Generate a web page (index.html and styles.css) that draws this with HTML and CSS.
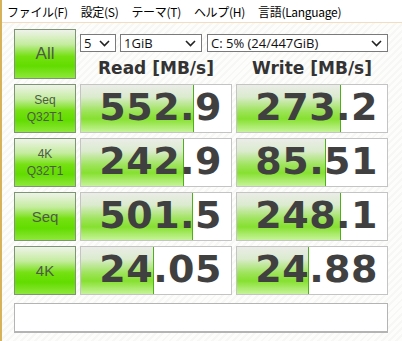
FILE: index.html
```html
<!DOCTYPE html>
<html lang="ja">
<head>
    <meta charset="UTF-8">
    <title>CrystalDiskMark</title>
    <link rel="stylesheet" href="styles.css">
</head>
<body>
    <!-- メニュー -->
    <div class="menu">
        <span class="menu-item">ファイル(F)</span>
        <span class="menu-item">設定(S)</span>
        <span class="menu-item">テーマ(T)</span>
        <span class="menu-item">ヘルプ(H)</span>
        <span class="menu-item">言語(Language)</span>
    </div>

    <div class="main">
        <div class="grid">
            <div class="btn btn-all">All</div>
            <div class="top-right">
                <div class="selects">
                    <div class="select sel-count"><span>5</span><svg width="11" height="7" viewBox="0 0 11 7"><path d="M1 1 L5.5 5.5 L10 1" fill="none" stroke="#222" stroke-width="1.6"/></svg></div>
                    <div class="select sel-size"><span>1GiB</span><svg width="11" height="7" viewBox="0 0 11 7"><path d="M1 1 L5.5 5.5 L10 1" fill="none" stroke="#222" stroke-width="1.6"/></svg></div>
                    <div class="select sel-drive"><span>C: 5% (24/447GiB)</span><svg width="11" height="7" viewBox="0 0 11 7"><path d="M1 1 L5.5 5.5 L10 1" fill="none" stroke="#222" stroke-width="1.6"/></svg></div>
                </div>
                <div class="heads">
                    <div class="head">Read [MB/s]</div>
                    <div class="head">Write [MB/s]</div>
                </div>
            </div>

            <!-- Seq Q32T1 -->
            <div class="btn btn-small">Seq<br>Q32T1</div>
            <div class="value"><div class="bar" style="width: 112px"></div><span>552.9</span></div>
            <div class="value"><div class="bar" style="width: 103px"></div><span>273.2</span></div>

            <!-- 4K Q32T1 -->
            <div class="btn btn-small">4K<br>Q32T1</div>
            <div class="value"><div class="bar" style="width: 102px"></div><span>242.9</span></div>
            <div class="value"><div class="bar" style="width: 88px"></div><span>85.51</span></div>

            <!-- Seq -->
            <div class="btn btn-big">Seq</div>
            <div class="value"><div class="bar" style="width: 111px"></div><span>501.5</span></div>
            <div class="value"><div class="bar" style="width: 103px"></div><span>248.1</span></div>

            <!-- 4K -->
            <div class="btn btn-big">4K</div>
            <div class="value"><div class="bar" style="width: 72px"></div><span>24.05</span></div>
            <div class="value"><div class="bar" style="width: 71px"></div><span>24.88</span></div>
        </div>

        <div class="comment"></div>
    </div>
</body>
</html>
```

FILE: styles.css
```css
body {
    margin: 0;
    width: 402px;
    height: 341px;
    overflow: hidden;
    font-family: "DejaVu Sans", "Noto Sans CJK JP", sans-serif;
    background: repeating-linear-gradient(135deg, #f7f7f5 0px, #f7f7f5 2px, #fdfdfc 2px, #fdfdfc 5px);
    border-left: 2px solid #d6b25a;
    box-sizing: border-box;
}

.menu {
    height: 22px;
    background: #fff;
    border-bottom: 1px solid #f3dcc0;
    margin-left: -2px;
    padding-left: 7px;
    display: flex;
    align-items: center;
    font-family: "Noto Sans CJK JP", sans-serif;
    font-size: 12px;
    color: #000;
}

.menu-item {
    margin-right: 13px;
    letter-spacing: -0.3px;
}

.main {
    padding: 6px 0 0 12px;
}

.grid {
    display: grid;
    grid-template-columns: 62px 152px 152px;
    grid-template-rows: 50px repeat(4, 49px);
    column-gap: 4px;
    row-gap: 5px;
}

.btn {
    box-sizing: border-box;
    border: 1px solid #7f9474;
    background: linear-gradient(to bottom, #eef3ea 0%, #c4ec9e 30%, #74e010 55%, #62dc00 75%, #8ee83a 100%);
    color: #4f5a48;
    display: flex;
    align-items: center;
    justify-content: center;
    text-align: center;
}

.btn-all {
    font-size: 17px;
    font-family: "Liberation Sans", sans-serif;
}

.btn-small {
    font-size: 12px;
    line-height: 17px;
    font-family: "Liberation Sans", sans-serif;
}

.btn-big {
    font-size: 15px;
    font-family: "Liberation Sans", sans-serif;
}

.top-right {
    grid-column: 2 / 4;
    display: flex;
    flex-direction: column;
}

.selects {
    display: flex;
    gap: 4px;
    margin-top: 5px;
}

.select {
    box-sizing: border-box;
    height: 18px;
    background: #fff;
    border: 1px solid #7a7a7a;
    display: flex;
    align-items: center;
    justify-content: space-between;
    padding: 0 5px 0 3px;
    font-family: "Open Sans", sans-serif;
    font-size: 13px;
    color: #111;
}

.sel-count { width: 36px; }
.sel-size { width: 82px; }
.sel-drive { width: 181px; margin-left: 1px; }

.heads {
    display: flex;
    gap: 4px;
    margin-top: 6px;
}

.head {
    width: 152px;
    text-align: center;
    font-weight: bold;
    font-size: 17px;
    color: #333;
}

.value {
    position: relative;
    box-sizing: border-box;
    border: 1px solid #c4c4c4;
    background: #fff;
    display: flex;
    align-items: center;
    justify-content: flex-end;
    padding: 0 9px 3px 0;
}

.bar {
    position: absolute;
    left: 0;
    top: 0;
    bottom: 0;
    border-right: 1px solid #4fae1c;
    background: linear-gradient(to bottom, #eaede7 0%, #dcebcf 25%, #9ee45c 55%, #86e030 72%, #c6f49a 100%);
}

.value span {
    position: relative;
    font-weight: bold;
    font-size: 38px;
    color: #404040;
    letter-spacing: 0.5px;
}

.comment {
    box-sizing: border-box;
    width: 374px;
    height: 30px;
    margin-top: 8px;
    background: #fff;
    border: 1px solid #b4b4b4;
    border-bottom-width: 2px;
}
```
